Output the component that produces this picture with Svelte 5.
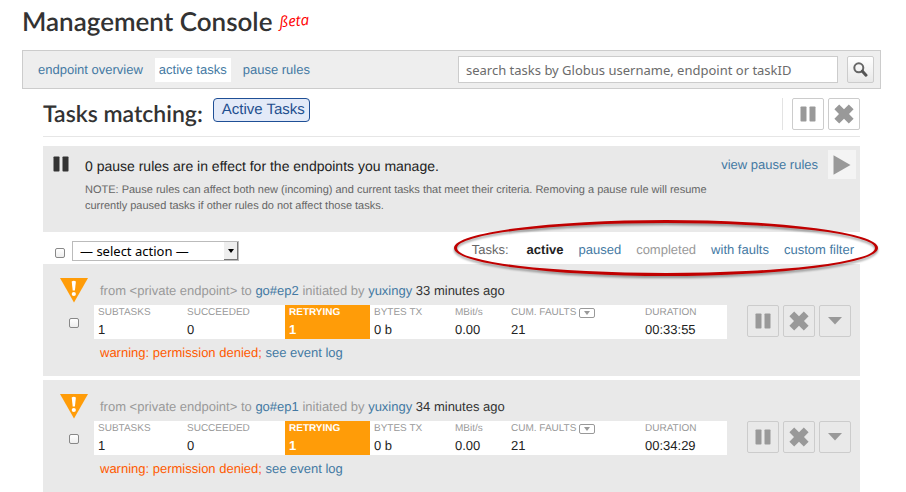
<script>
  const sections = [
    { label: 'endpoint overview', active: false },
    { label: 'active tasks', active: true },
    { label: 'pause rules', active: false }
  ];

  const filters = [
    { label: 'active', kind: 'current' },
    { label: 'paused', kind: '' },
    { label: 'completed', kind: 'muted' },
    { label: 'with faults', kind: '' },
    { label: 'custom filter', kind: '' }
  ];

  const tasks = [
    { id: 1, target: 'go#ep2', user: 'yuxingy', age: '33 minutes ago', duration: '00:33:55' },
    { id: 2, target: 'go#ep1', user: 'yuxingy', age: '34 minutes ago', duration: '00:34:29' }
  ];
</script>

{#snippet pauseIcon()}
  <svg class="pause-icon" width="16" height="16" viewBox="0 0 16 16" aria-hidden="true">
    <rect x="0.5" y="0.5" width="6" height="15" rx="0.8" />
    <rect x="9.5" y="0.5" width="6" height="15" rx="0.8" />
  </svg>
{/snippet}

{#snippet crossIcon()}
  <svg width="20" height="20" viewBox="0 0 20 20" aria-hidden="true">
    <path d="M5.2 0.6 10 5.2 14.8 0.6 19.6 5.2 15 10 19.6 14.8 14.8 19.4 10 14.8 5.2 19.4 0.4 14.8 5 10 0.4 5.2Z" />
  </svg>
{/snippet}

<div class="page">
  <header class="title">
    <h1>Management Console</h1>
    <em class="beta">ßeta</em>
  </header>

  <div class="bar">
    <nav class="sections" aria-label="Sections">
      {#each sections as s}
        <a href="#{s.label.replace(' ', '-')}" class:active={s.active}>{s.label}</a>
      {/each}
    </nav>
    <form class="search" onsubmit={(e) => e.preventDefault()}>
      <input type="text" aria-label="Search tasks" placeholder="search tasks by Globus username, endpoint or taskID" />
      <button type="submit" aria-label="Search">
        <svg width="15" height="15" viewBox="0 0 15 15" aria-hidden="true">
          <circle cx="5.8" cy="5.8" r="4.5" fill="none" stroke="#666" stroke-width="2" />
          <path d="M9.4 9.2 13 13.2" stroke="#555" stroke-width="3" stroke-linecap="round" />
        </svg>
      </button>
    </form>
  </div>

  <main>
    <div class="heading">
      <h2>Tasks matching:</h2>
      <span class="tag">Active Tasks</span>
      <div class="actions divided">
        <button class="icon" aria-label="Pause matching tasks">{@render pauseIcon()}</button>
        <button class="icon" aria-label="Cancel matching tasks">{@render crossIcon()}</button>
      </div>
    </div>

    <section class="notice">
      {@render pauseIcon()}
      <div class="notice-text">
        <h3>0 pause rules are in effect for the endpoints you manage.</h3>
        <p>NOTE: Pause rules can affect both new (incoming) and current tasks that meet their criteria. Removing a pause rule will resume currently paused tasks if other rules do not affect those tasks.</p>
      </div>
      <a class="view-rules" href="#view">view pause rules</a>
      <button class="play" aria-label="Resume">
        <svg width="18" height="20" viewBox="0 0 18 20" aria-hidden="true"><path d="M0.5 0.3 17.5 10 0.5 19.7Z" /></svg>
      </button>
    </section>

    <div class="toolbar">
      <input type="checkbox" aria-label="Select all tasks" />
      <div class="picker">
        <select aria-label="Action"><option>— select action —</option></select>
        <span class="drop" aria-hidden="true">
          <svg width="6" height="4" viewBox="0 0 6 4"><path d="M0 0H6L3 4Z" /></svg>
        </span>
      </div>
      <nav class="filters" aria-label="Task filters">
        <span class="filters-label">Tasks:</span>
        {#each filters as f}
          <a href="#{f.label.replace(' ', '-')}" class={f.kind}>{f.label}</a>
        {/each}
        <span class="callout" aria-hidden="true"></span>
      </nav>
    </div>

    {#each tasks as t (t.id)}
      <article class="task">
        <div class="status">
          <svg width="28" height="25" viewBox="0 0 28 25" role="img" aria-label="Warning">
            <path d="M0 0H28L14 24.5Z" fill="#ff9c08" />
            <path d="M11.7 3.4Q13.8 2.2 15.9 3.4L14.9 12.6H12.7Z" fill="#fff" />
            <circle cx="13.8" cy="16" r="2.1" fill="#fff" />
          </svg>
          <input type="checkbox" aria-label="Select task to {t.target}" />
        </div>
        <div class="detail">
          <p class="summary">
            from &lt;private endpoint&gt; to <a href="#{t.id}-endpoint">{t.target}</a> initiated by
            <a href="#{t.id}-user">{t.user}</a> <span class="age">{t.age}</span>
          </p>
          <table>
            <colgroup>
              <col class="c1" /><col class="c2" /><col class="c3" /><col class="c4" /><col class="c5" /><col class="c6" /><col class="c7" />
            </colgroup>
            <thead>
              <tr>
                <th>SUBTASKS</th>
                <th>SUCCEEDED</th>
                <th class="retry">RETRYING</th>
                <th>BYTES TX</th>
                <th>MBit/s</th>
                <th>
                  <span class="faults">CUM. FAULTS
                    <button class="mini" aria-label="Show faults">
                      <svg width="6" height="4" viewBox="0 0 6 4" aria-hidden="true"><path d="M0 0H6L3 4Z" /></svg>
                    </button>
                  </span>
                </th>
                <th>DURATION</th>
              </tr>
            </thead>
            <tbody>
              <tr>
                <td>1</td>
                <td>0</td>
                <td class="retry">1</td>
                <td>0 b</td>
                <td>0.00</td>
                <td>21</td>
                <td>{t.duration}</td>
              </tr>
            </tbody>
          </table>
          <p class="warning">warning: permission denied; <a href="#{t.id}-log">see event log</a></p>
        </div>
        <div class="actions">
          <button class="icon" aria-label="Pause task">{@render pauseIcon()}</button>
          <button class="icon" aria-label="Cancel task">{@render crossIcon()}</button>
          <button class="icon" aria-label="More">
            <svg width="14" height="8" viewBox="0 0 14 8" aria-hidden="true"><path d="M0 0H14L7 7.5Z" /></svg>
          </button>
        </div>
      </article>
    {/each}
  </main>
</div>

<style>
  :global(body) {
    margin: 0;
    background: #fff;
  }

  .page {
    padding: 0 25px 0 22px;
    font: 13px/16px 'Liberation Sans', Arial, sans-serif;
    color: #222;
    text-rendering: geometricPrecision;
  }

  h1, h2, h3, p {
    margin: 0;
    font-weight: normal;
  }

  a {
    color: #4479a3;
    text-decoration: none;
  }

  button {
    padding: 0;
    cursor: pointer;
  }

  svg {
    display: block;
  }

  .title {
    display: flex;
    gap: 8px;
    height: 50px;
    box-sizing: border-box;
    padding-top: 3px;
  }

  h1 {
    font: 600 26px/36px Lato, sans-serif;
    color: #333;
  }

  .beta {
    font: italic 15px/36px 'Open Sans', sans-serif;
    color: #f00;
    transform: rotate(-5deg);
  }

  .bar {
    display: flex;
    justify-content: space-between;
    align-items: center;
    box-sizing: border-box;
    height: 39px;
    padding: 0 6px 0 11px;
    border: 1px solid #ccc;
    background: #eee;
  }

  .sections {
    display: flex;
    gap: 8px;
  }

  .sections a {
    padding: 0 4px;
    line-height: 24px;
  }

  .sections .active {
    background: #fff;
  }

  .search {
    display: flex;
    flex: 0 1 416px;
    gap: 9px;
  }

  .search input {
    flex: 1;
    min-width: 0;
    box-sizing: border-box;
    height: 27px;
    padding: 0 7px;
    border: 1px solid #ccc;
    background: #fff;
    font: 13px 'Noto Sans', sans-serif;
    color: #333;
  }

  .search input::placeholder {
    color: #6b6b6b;
  }

  .search button {
    display: grid;
    place-items: center;
    width: 27px;
    height: 27px;
    border: 1px solid #ccc;
    border-radius: 2px;
    background: linear-gradient(#fff, #e8e8e8);
  }

  main {
    padding: 0 21px;
  }

  .heading {
    display: flex;
    align-items: flex-start;
    gap: 10px;
    box-sizing: border-box;
    height: 48px;
    padding-top: 9px;
    border-bottom: 1px solid #e6e6e6;
    margin-bottom: 9px;
  }

  h2 {
    font: 600 23px/30px Lato, sans-serif;
    color: #333;
  }

  .tag {
    padding: 0 4px 0 8px;
    border: 1px solid #1f4f96;
    border-radius: 4px;
    background: #e3eaf8;
    color: #1f4f8f;
    font-size: 15px;
    line-height: 22px;
  }

  .actions {
    display: flex;
    gap: 4px;
  }

  .divided {
    margin-left: auto;
    padding-left: 9px;
    border-left: 1px solid #e3e3e3;
  }

  .icon {
    display: grid;
    place-items: center;
    width: 32px;
    height: 32px;
    border: 1px solid #ccc;
    border-radius: 2px;
    background: transparent;
    fill: #999;
  }

  .notice {
    display: flex;
    align-items: flex-start;
    box-sizing: border-box;
    height: 86px;
    padding: 4px 4px 0 10px;
    background: #e9e9e9;
  }

  .notice > .pause-icon {
    flex: none;
    margin-top: 6px;
    fill: #333;
  }

  .notice-text {
    flex: 1;
    padding: 7px 4px 0 16px;
  }

  h3 {
    font-size: 14px;
    line-height: 18px;
    margin-bottom: 7px;
  }

  .notice p {
    font-size: 11px;
    color: #666;
  }

  .view-rules {
    flex: none;
    margin: 7px 10px 0 0;
  }

  .play {
    display: grid;
    place-items: center;
    width: 28px;
    height: 29px;
    border: 0;
    background: #f4f4f4;
    fill: #999;
  }

  .toolbar {
    display: flex;
    align-items: center;
    height: 32px;
    padding: 0 6px 0 12px;
  }

  input[type='checkbox'] {
    appearance: none;
    flex: none;
    box-sizing: border-box;
    width: 10px;
    height: 10px;
    margin: 0;
    border: 1px solid #888;
    border-radius: 2px;
    background: linear-gradient(#fff, #eee);
  }

  .toolbar input {
    margin-top: 9px;
  }

  .picker {
    display: flex;
    box-sizing: border-box;
    width: 167px;
    height: 20px;
    margin: 6px 0 0 7px;
    border: 1px solid #bbb;
    background: #fff;
  }

  select {
    appearance: none;
    flex: 1;
    min-width: 0;
    padding: 0 0 0 7px;
    border: 0;
    background: transparent;
    font: 13px/18px 'Noto Sans', sans-serif;
    color: #000;
  }

  .drop {
    display: grid;
    place-items: center;
    width: 13px;
    border-right: 1px solid #777;
    border-bottom: 1px solid #777;
    background: #eee;
    fill: #000;
  }

  .filters {
    position: relative;
    display: flex;
    gap: 15px;
    margin-left: auto;
    line-height: 32px;
    padding-top: 3px;
  }

  .filters-label {
    margin-right: 3px;
    color: #666;
  }

  .filters .current {
    color: #222;
    font-weight: bold;
  }

  .filters .muted {
    color: #999;
  }

  .callout {
    position: absolute;
    inset: -11px -24px -10px -18px;
    border: 3px solid #c00000;
    border-radius: 50%;
    filter: drop-shadow(0 2px 1px rgba(0, 0, 0, 0.4));
    pointer-events: none;
  }

  .task {
    display: flex;
    box-sizing: border-box;
    height: 112px;
    padding: 14px 9px 0 17px;
    background: #e9e9e9;
  }

  .task + .task {
    margin-top: 4px;
  }

  .status {
    display: flex;
    flex-direction: column;
    align-items: center;
    gap: 15px;
    width: 28px;
  }

  .detail {
    flex: 1;
    padding: 0 20px 0 6px;
  }

  .summary {
    padding: 5px 0 6px 6px;
    color: #999;
  }

  .age {
    color: #333;
  }

  table {
    width: 100%;
    table-layout: fixed;
    border-collapse: collapse;
    background: #fff;
  }

  .c1 { width: 89px; }
  .c2 { width: 102px; }
  .c3 { width: 85px; }
  .c4 { width: 81px; }
  .c5 { width: 56px; }
  .c6 { width: 134px; }
  .c7 { width: 86px; }

  th, td {
    padding: 0 0 0 4px;
    text-align: left;
    white-space: nowrap;
  }

  th {
    height: 15px;
    font-size: 10px;
    font-weight: normal;
    line-height: 15px;
    color: #999;
  }

  td {
    height: 19px;
    line-height: 19px;
  }

  .retry {
    background: #ff9c08;
    color: #fff;
    font-weight: bold;
  }

  .faults {
    display: flex;
    align-items: center;
    gap: 3px;
  }

  .mini {
    display: grid;
    place-items: center;
    box-sizing: border-box;
    width: 16px;
    height: 10px;
    border: 1px solid #999;
    border-radius: 2px;
    background: #fff;
    fill: #999;
  }

  .warning {
    padding: 6px 0 0 6px;
    color: #ff5a00;
  }

  .task .actions {
    padding-top: 27px;
  }
</style>
